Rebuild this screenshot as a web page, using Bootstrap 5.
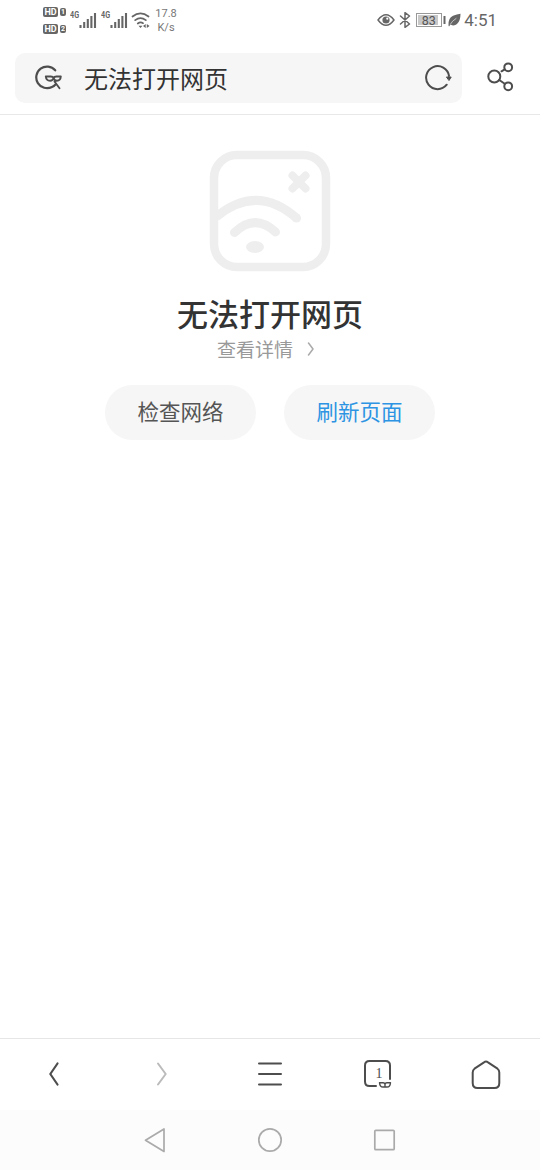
<!DOCTYPE html>
<html lang="zh-CN">
<head>
<meta charset="utf-8">
<meta name="viewport" content="width=device-width, initial-scale=1">
<title>无法打开网页</title>
<link href="https://cdn.jsdelivr.net/npm/bootstrap@5.3.0/dist/css/bootstrap.min.css" rel="stylesheet">
<style>
body{font-family:Roboto,"Noto Sans CJK SC",sans-serif;color:#333;background:#fff}
svg{display:block;flex:none;fill:none;stroke:#4d4d4d;stroke-width:2;stroke-linecap:round;stroke-linejoin:round}
.screen{height:1170px;width:540px;overflow:hidden}
.status{height:42px;padding-left:43px;padding-right:44px;padding-bottom:2px;color:#666}
.status svg{stroke:#666}
.hd-row{height:11px;gap:2px}
.hd-tag,.sim-tag{background:#666;color:#fff;font-weight:700;border-radius:2px;text-align:center}
.hd-tag{width:15px;height:10px;font-size:9px;line-height:10px}
.sim-tag{width:6px;height:8px;font-size:7px;line-height:8px}
.signal{width:27px;height:18px}
.net-type{font:700 9px/9px Roboto,sans-serif;transform:scaleX(.8);transform-origin:0 0;width:9px}
.speed{font-size:11px;line-height:13.5px;width:24px;color:#777;padding-top:1px}
.battery{width:26px;height:14px;border:1px solid #999;padding:1px}
.charge{background:#c8c8c8;font-size:12.5px;line-height:11px;height:10px;width:20px;padding-left:1px;color:#555;text-align:center}
.clock{font-size:17px;line-height:20px}
.topbar{height:73px;padding:11px 26px 0 15px;border-bottom:1px solid #e8e8e8}
.address{width:447px;height:50px;background:#f6f6f6;border-radius:10px;padding:0 10px 0 20px}
.address-title{font-size:24px;line-height:36px;margin-left:21px;padding-top:3px}
.error-title{font-size:31px;line-height:44px;font-weight:500;margin-top:22px}
.details{font-size:19px;line-height:26px;color:#999;padding-right:8px}
.pill{width:151px;height:55px;border-radius:28px;background:#f6f6f6;border:0;color:#555;font-size:21.5px;padding:2px 0 0}
.pill-blue{color:#2d94e3}
.toolbar{height:72px;border-top:1px solid #e6e6e6;padding-bottom:2px}
.toolbar>*{width:108px}
.tabs-count{top:6px;left:0;right:0;padding-left:2px;font:14px/18px "Liberation Serif",serif;color:#4d4d4d}
.sysnav{height:60px;background:#fcfcfc;gap:90px}
.sysnav svg{stroke:#aaa;stroke-width:1.7}
</style>
</head>
<body>
<div class="screen d-flex flex-column">
  <div class="status d-flex align-items-center justify-content-between">
    <div class="d-flex align-items-center">
      <div class="d-flex flex-column" style="gap:6px">
        <div class="hd-row d-flex align-items-center"><span class="hd-tag">HD</span><span class="sim-tag">1</span></div>
        <div class="hd-row d-flex align-items-center"><span class="hd-tag">HD</span><span class="sim-tag">2</span></div>
      </div>
      <div class="signal d-flex ms-1"><span class="net-type ms-0">4G</span>
        <svg width="18" height="18" viewBox="0 0 18 18"><path style="stroke-width:2.1;stroke-linecap:butt" d="M1.500 14v3M5.200 11v6M8.800 8v9M12.400 5v12M16 2v15"/></svg></div>
      <div class="signal d-flex ms-1"><span class="net-type ms-0">4G</span>
        <svg width="18" height="18" viewBox="0 0 18 18"><path style="stroke-width:2.1;stroke-linecap:butt" d="M1.500 14v3M5.200 11v6M8.800 8v9M12.400 5v12M16 2v15"/></svg></div>
      <svg style="margin-left:3px" width="20" height="18" viewBox="0 0 20 18"><path style="stroke-width:1.700" d="M1.500 5.500Q9.500-.800 17.500 5.500M4.200 9.200Q9.500 5 14.800 9.200M6.800 12.500Q9.500 10.500 12 12.200"/><path style="fill:#666;stroke:none" d="M7.500 14.700h4l-2 2.300zM12 15l2.700-2v4zM18.500 15l-2.700-2v4z"/></svg>
      <div class="speed text-center" style="margin-left:3px">17.8<br>K/s</div>
    </div>
    <div class="d-flex align-items-center">
      <svg width="18" height="14" viewBox="0 0 18 14"><path style="stroke-width:1.500" d="M1 7Q9-3.500 17 7Q9 17.500 1 7Z"/><circle cx="9" cy="7" r="3.600" style="fill:#666;stroke:none"/><circle cx="10.300" cy="5.700" r="1.100" style="fill:#fff;stroke:none"/></svg>
      <svg style="margin-left:4px" width="12" height="16" viewBox="0 0 12 16"><path style="stroke-width:1.500" d="M1.500 4l9 8L6 15.300V.700L10.500 4l-9 8"/></svg>
      <div class="battery" style="margin-left:5px"><div class="charge">83</div></div>
      <svg style="margin-left:1px" width="3" height="8" viewBox="0 0 3 8"><path style="stroke-linecap:butt" d="M1.500 0v8"/></svg>
      <svg style="margin-left:2px" width="13" height="14" viewBox="0 0 13 14"><path style="fill:#666;stroke:none" d="M.500 12.500Q0 5 5 2.800Q9 1.500 12.500.800Q12.500 8 9 11Q6 13.500 2.500 11.500L1 13.500Z"/><path style="stroke:#fff;stroke-width:.6" d="M2.500 11Q4 8 8 5.500"/></svg>
      <span class="clock" style="margin-left:3px;margin-right:-1px">4:51</span>
    </div>
  </div>

  <header class="topbar d-flex align-items-start justify-content-between">
    <div class="address d-flex align-items-center">
      <svg width="28" height="28" viewBox="35 64 28 28"><path style="stroke-width:2.200" d="M55.200 70.300A10.800 10.800 0 1 0 52 87Q54 86.200 55.500 84.500"/><path style="stroke-width:1.900" d="M45.800 76.500h5q2.200 0 2.800 1.500q.7-1.500 2.800-1.500h4.400q-.3 4.200-3.800 4.200q-2.700 0-3.400-2.700q-.7 2.700-3.500 2.700q-3.900 0-4.300-4.200zM54.500 81.500L59.500 88.300"/></svg>
      <span class="address-title">无法打开网页</span>
      <svg class="ms-auto" width="28" height="28" viewBox="424 64 28 28"><path d="M449 76A11.500 11.500 0 1 0 446.700 84.700"/><path style="fill:#4d4d4d;stroke-width:1" d="M446.800 77h4.400l-2 3.200z"/></svg>
    </div>
    <svg class="mt-2" width="28" height="32" viewBox="486 61 28 32"><circle cx="494.300" cy="76.500" r="6"/><circle cx="508.200" cy="67.300" r="3.900"/><circle cx="508.200" cy="86.300" r="3.900"/><path d="M501.500 71.300l3.200-2M499.300 80l5.400 3.700"/></svg>
  </header>

  <main class="flex-grow-1 d-flex flex-column align-items-center">
    <svg style="margin-top:35px;stroke:#eee" width="122" height="122" viewBox="209 150 122 122">
      <rect x="214" y="155" width="112" height="112" rx="23" style="stroke-width:8.500"/>
      <path style="stroke-width:9;stroke-linecap:butt" d="M216 217Q257 183 297 218.500"/><path style="stroke-width:9" d="M296.500 218l.1.100"/>
      <path style="stroke-width:9" d="M234.500 232.500Q255 213 275.500 232"/>
      <ellipse cx="255" cy="247" rx="9" ry="6" style="fill:#eee;stroke:none"/>
      <path style="stroke-width:8" d="M292.500 175.500l13 13M305.500 175.500l-13 13"/>
    </svg>
    <h1 class="error-title mb-0">无法打开网页</h1>
    <a class="details d-flex align-items-center text-decoration-none" href="#">查看详情
      <svg style="margin-left:14px;margin-bottom:4px;stroke:#aaa;stroke-width:1.500" width="8" height="14" viewBox="0 0 8 14"><path d="M1.500 1l4.500 6-4.500 6"/></svg></a>
    <div class="d-flex" style="gap:28px;margin-top:21px">
      <button class="pill btn" type="button">检查网络</button>
      <button class="pill pill-blue btn" type="button">刷新页面</button>
    </div>
  </main>

  <nav class="toolbar d-flex align-items-center">
    <div class="d-flex justify-content-center"><svg width="12" height="26" viewBox="0 0 12 26"><path style="stroke-width:2.200" d="M9.500 2.500L2.300 13l7.200 10.500"/></svg></div>
    <div class="d-flex justify-content-center"><svg style="stroke:#bbb" width="12" height="26" viewBox="0 0 12 26"><path d="M2 2.500L9.700 13L2 23.500"/></svg></div>
    <div class="d-flex justify-content-center"><svg width="26" height="26" viewBox="0 0 26 26"><path d="M2 2.500h22M2 13h22M2 23.500h22"/></svg></div>
    <div class="d-flex justify-content-center position-relative"><svg width="30" height="30" viewBox="363 1059 30 30"><path d="M376 1086H369.500Q365 1086 365 1081.500V1065.500Q365 1061 369.500 1061H385.500Q390 1061 390 1065.500V1079"/><path style="stroke-width:1.400" d="M379.500 1082.700h3.500q2 0 2 1.800q0-1.800 2-1.800h3.500q-.3 4.300-3.500 4.300h-4q-3.200 0-3.500-4.300zM385 1084.500v2.300"/></svg>
      <span class="tabs-count position-absolute text-center">1</span></div>
    <div class="d-flex justify-content-center"><svg width="30" height="30" viewBox="471 1059 30 30"><path d="M484 1062.300Q486 1060.700 488 1062.300L497.500 1068.700Q499.300 1070 499.300 1072.500V1083Q499.300 1088 494.500 1088H477.500Q472.700 1088 472.700 1083V1072.500Q472.700 1070 474.500 1068.700Z"/></svg></div>
  </nav>
  <div class="sysnav d-flex align-items-center justify-content-center">
    <svg width="24" height="26" viewBox="142.500 1127 24 26"><path d="M163.500 1129v22.500l-18.500-11.200z"/></svg>
    <svg width="26" height="26" viewBox="257 1127 26 26"><circle cx="270" cy="1140" r="11.200"/></svg>
    <svg width="24" height="24" viewBox="373 1128 24 24"><rect x="374.800" y="1130.300" width="19.400" height="19.400" rx="1"/></svg>
  </div>
</div>
<script src="https://cdn.jsdelivr.net/npm/bootstrap@5.3.0/dist/js/bootstrap.bundle.min.js"></script>
</body>
</html>
